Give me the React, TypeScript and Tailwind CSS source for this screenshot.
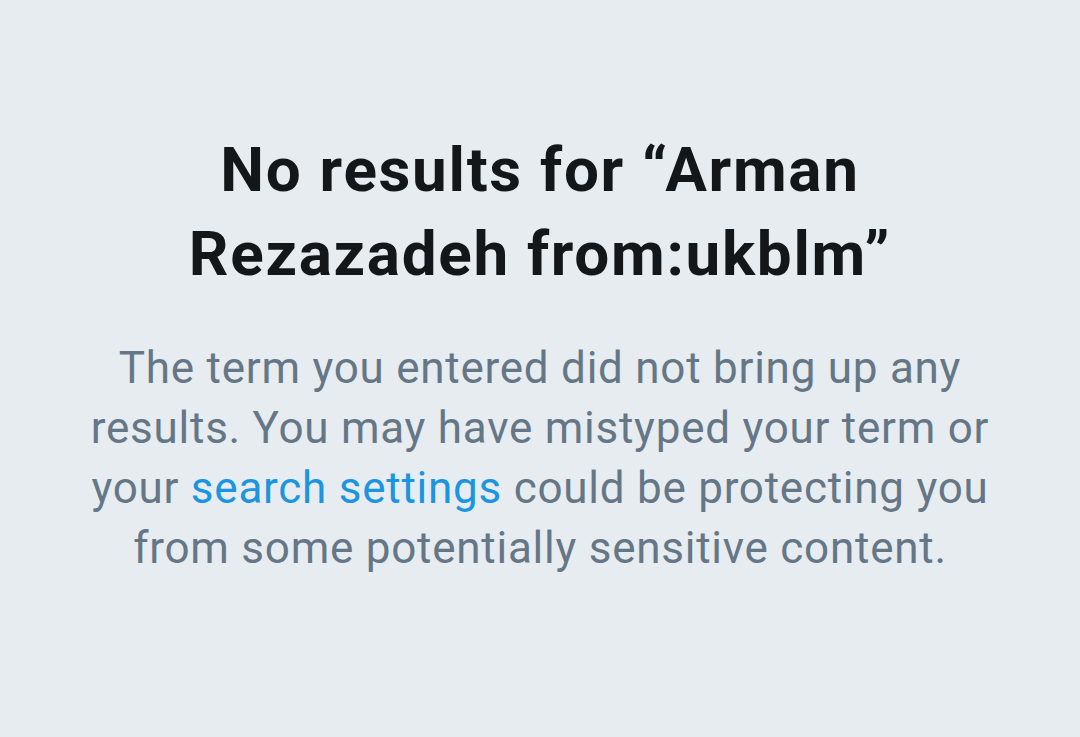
export default function App() {
  return (
    <div
      className="flex min-h-[737px] w-full justify-center bg-[#e6ecf0] px-[80px] pt-[128px]"
      style={{ fontFamily: 'Roboto, "Noto Sans", sans-serif' }}
    >
      <div className="flex w-[920px] flex-col items-center text-center">
        <h1 className="text-[62px] font-bold leading-[84px] tracking-[1.7px] text-[#14171a]">
          No results for “Arman Rezazadeh from:ukblm”
        </h1>
        <p className="mt-[42px] text-[44px] leading-[60px] tracking-[0.75px] text-[#657786]">
          The term you entered did not bring up any results. You may have
          mistyped your term or your{' '}
          <a href="#" className="text-[#1b95e0]">
            search settings
          </a>{' '}
          could be protecting you from some potentially sensitive content.
        </p>
      </div>
    </div>
  )
}
